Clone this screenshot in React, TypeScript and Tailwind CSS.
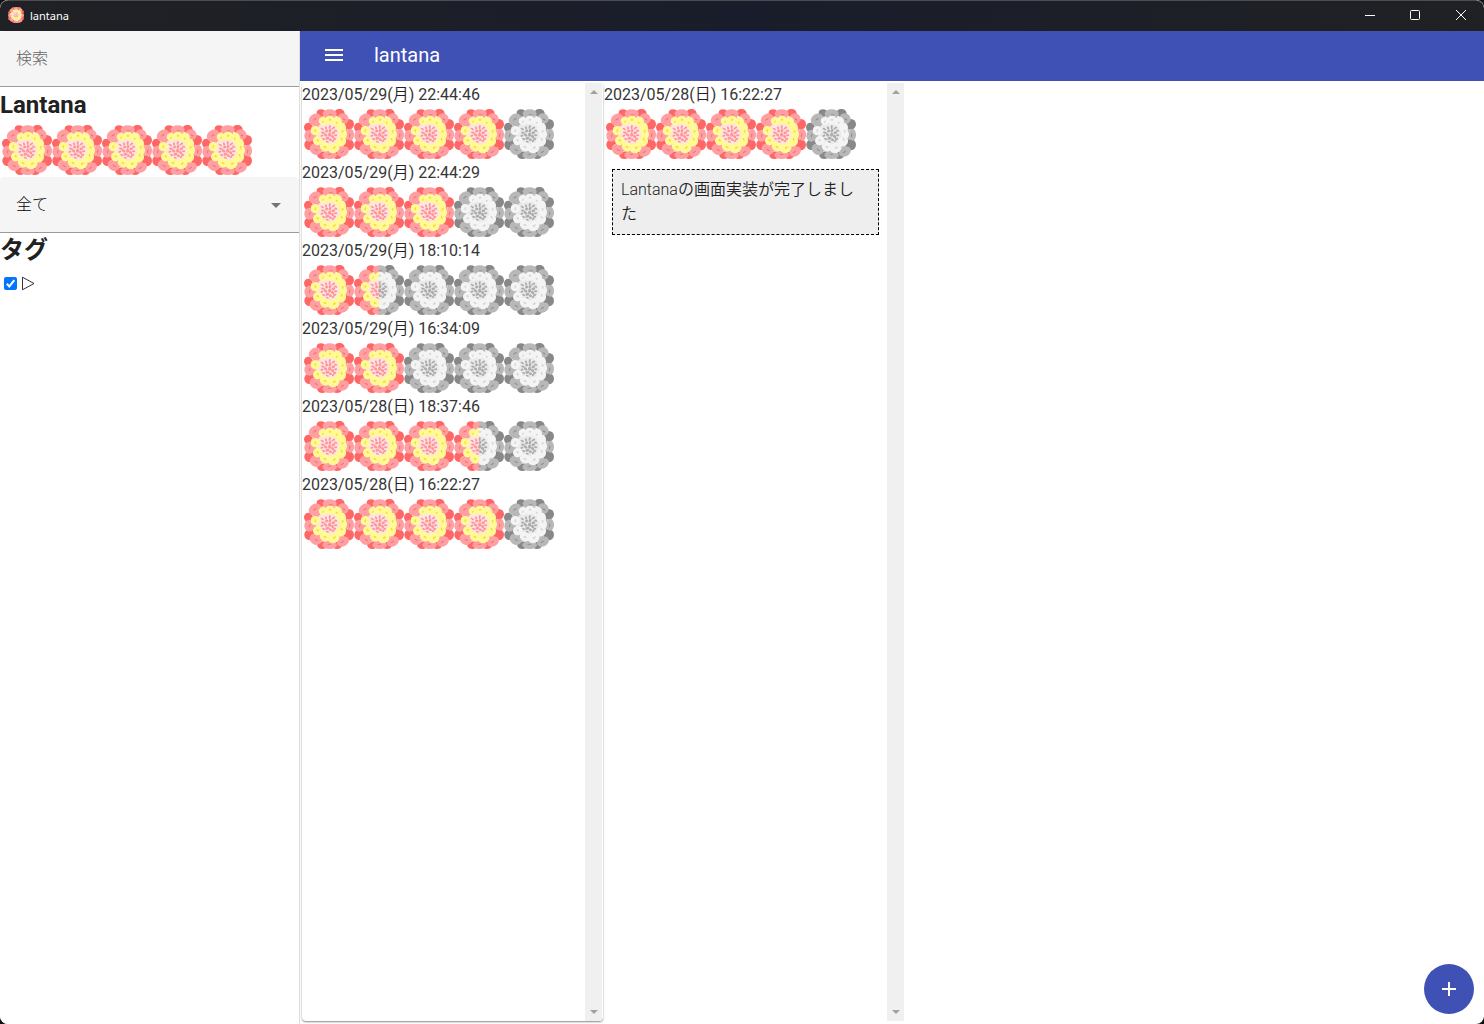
import React from "react";

type Blob = [number, number, number, number, number];

const outerDark: Blob[] = [
  [51, 12, 13, 11, 0], [107, 12, 15, 12, 10], [135, 46, 15, 16, 0], [13, 55, 13, 14, 0],
  [16, 107, 15, 16, 10], [134, 107, 16, 17, 0], [55, 139, 15, 11, 0], [99, 139, 15, 11, 0],
];
const outerLight: Blob[] = [
  [77, 14, 21, 13, 0], [33, 31, 20, 16, -35], [117, 29, 17, 16, 30],
  [139, 77, 11, 18, 0], [16, 80, 15, 18, 0], [35, 121, 19, 16, 30], [77, 138, 22, 12, 0],
  [117, 128, 19, 14, -30],
];
const inner: Blob[] = [
  [57, 36, 13, 12, 0], [78, 33, 15, 13, 0], [100, 38, 14, 15, 0], [113, 56, 13, 15, 0],
  [117, 76, 12, 16, 0], [111, 98, 16, 14, -40], [89, 117, 18, 15, -20], [63, 113, 16, 14, 25],
  [41, 95, 14, 14, 35], [34, 65, 14, 14, 0],
];
const outerMarks: Blob[] = [
  [33, 31, 6, 1.8, -35], [80, 17, 6, 1.6, 0], [120, 31, 5, 2, 35], [17, 80, 1.8, 6, 15],
  [137, 79, 1.8, 6, 10], [37, 123, 6, 1.8, 30], [76, 136, 6, 1.6, 0], [115, 129, 6, 2, -35],
];
const innerMarks: Blob[] = [
  [57, 38, 2, 4, 30], [78, 32, 4, 3, 0], [98, 41, 3, 3, 0], [116, 67, 2.5, 5, 0],
  [113, 91, 2.5, 5, -20], [91, 116, 5, 3, -35], [63, 114, 5, 3, 30], [41, 94, 4, 3, 40],
  [34, 65, 2.5, 5, 10],
];
const center: Blob[] = [
  [55, 60, 6, 2.5, 30], [66, 57, 3, 5, -20], [77, 54, 3, 6, 10], [88, 57, 6, 3, -30],
  [95, 65, 5, 3, 20], [57, 71, 6, 3, 10], [68, 66, 5, 4, -40], [78, 65, 4, 6, 20],
  [88, 71, 6, 4, -20], [95, 79, 5, 3, 0], [54, 80, 5, 3, -30], [65, 78, 6, 4, 40],
  [77, 77, 5, 6, 0], [86, 83, 6, 4, 50], [92, 90, 5, 3, -20], [59, 90, 5, 3, 30],
  [70, 88, 6, 4, -20], [79, 92, 5, 4, 20], [87, 96, 4, 3, -40], [70, 98, 5, 2.5, 20],
];

const warm = { dark: "#ff6666", light: "#ff9fa2", mark: "#f57175", ring: "#fffa96", ringMark: "#f8dc3c", core: "#ffe4e4", bits: "#ff9598" };
const grey = { dark: "#888888", light: "#b8b8b8", mark: "#8f8f8f", ring: "#f4f4f4", ringMark: "#d6d6d6", core: "#eaeaea", bits: "#acacac" };

function Blobs({ items, fill }: { items: Blob[]; fill: string }) {
  return (
    <g fill={fill}>
      {items.map(([x, y, rx, ry, a], i) => (
        <ellipse key={i} cx={x} cy={y} rx={rx} ry={ry} transform={`rotate(${a} ${x} ${y})`} />
      ))}
    </g>
  );
}

function Petals({ palette }: { palette: typeof warm }) {
  return (
    <>
      <circle cx="76" cy="76" r="56" fill={palette.light} />
      <Blobs items={outerDark} fill={palette.dark} />
      <Blobs items={outerLight} fill={palette.light} />
      <Blobs items={outerMarks} fill={palette.mark} />
      <ellipse cx="74" cy="74" rx="38" ry="37" fill={palette.core} />
      <Blobs items={inner} fill={palette.ring} />
      <circle cx="75" cy="75" r="27" fill={palette.core} />
      <Blobs items={innerMarks} fill={palette.ringMark} />
      <Blobs items={center} fill={palette.bits} />
    </>
  );
}

function Flower({ value, className = "size-[50px]" }: { value: number; className?: string }) {
  return (
    <span className={`relative block shrink-0 ${className}`}>
      <svg viewBox="0 0 150 150" className="block size-full">
        <Petals palette={value === 1 ? warm : grey} />
      </svg>
      {value === 0.5 && (
        <span className="absolute inset-y-0 left-0 w-1/2 overflow-hidden bg-white">
          <svg viewBox="0 0 150 150" className="block size-[50px] max-w-none">
            <Petals palette={warm} />
          </svg>
        </span>
      )}
    </span>
  );
}

function Rating({ score }: { score: number }) {
  return (
    <div className="flex h-[54px] p-0.5">
      {[0, 1, 2, 3, 4].map((i) => (
        <Flower key={i} value={Math.max(0, Math.min(1, score - i))} />
      ))}
    </div>
  );
}

function Entry({ date, day, time, score }: { date: string; day: string; time: string; score: number }) {
  return (
    <div>
      <div className="h-6 whitespace-nowrap leading-[23px] text-[#363636]">
        {date}(<span className="font-[350] text-[#222]">{day}</span>) {time}
      </div>
      <Rating score={score} />
    </div>
  );
}

function Scrollbar() {
  return (
    <div className="flex w-[17px] shrink-0 flex-col items-center justify-between bg-[#f0f0f0] py-[7px]">
      <svg width="8" height="4" viewBox="0 0 8 4" fill="#a0a0a0"><path d="M0 4 4 0l4 4z" /></svg>
      <svg width="8" height="4" viewBox="0 0 8 4" fill="#a0a0a0"><path d="M0 0 4 4 8 0z" /></svg>
    </div>
  );
}

const entries = [
  { date: "2023/05/29", day: "月", time: "22:44:46", score: 4 },
  { date: "2023/05/29", day: "月", time: "22:44:29", score: 3 },
  { date: "2023/05/29", day: "月", time: "18:10:14", score: 1.5 },
  { date: "2023/05/29", day: "月", time: "16:34:09", score: 2 },
  { date: "2023/05/28", day: "日", time: "18:37:46", score: 3.5 },
  { date: "2023/05/28", day: "日", time: "16:22:27", score: 4 },
];

function TitleBar() {
  return (
    <header className="flex h-[31px] shrink-0 items-center rounded-t-lg border-t border-[#4b4d50] bg-linear-to-r from-[#202124] via-[#191d2b] to-[#202124] pl-2 text-white">
      <Flower value={1} className="-mt-0.5 size-4" />
      <span className="ml-1.5 font-['Noto_Sans'] text-[11px] leading-4">lantana</span>
      <div className="ml-auto flex">
        <svg width="45" height="30" viewBox="0 0 45 30" stroke="#fff"><path d="M16 14.5h10" /></svg>
        <svg width="45" height="30" viewBox="0 0 45 30" fill="none" stroke="#fff"><rect x="16.5" y="9.5" width="9" height="9" rx="1" /></svg>
        <svg width="45" height="30" viewBox="0 0 45 30" stroke="#fff"><path d="m17 9 10 10M27 9 17 19" /></svg>
      </div>
    </header>
  );
}

function Sidebar() {
  return (
    <aside className="w-[300px] shrink-0 border-r border-[#dedede] bg-white">
      <div className="flex h-14 items-center rounded-t border-b border-[#9b9b9b] bg-[#f5f5f5] px-4 font-light text-[#666]">検索</div>
      <h2 className="h-9 text-2xl font-bold leading-9">Lantana</h2>
      <Rating score={5} />
      <div className="flex h-14 items-center justify-between rounded-t border-b border-[#9b9b9b] bg-[#f5f5f5] pl-4 pr-[18px]">
        <span className="font-light text-black">全て</span>
        <svg className="mt-px" width="10" height="5" viewBox="0 0 10 5" fill="#757575"><path d="M0 0h10L5 5z" /></svg>
      </div>
      <h2 className="h-9 text-2xl font-bold leading-[35px]">タグ</h2>
      <div className="flex h-7 items-center pl-1">
        <span className="flex size-[13px] items-center justify-center rounded-[2px] bg-[#0075ff]">
          <svg width="13" height="13" viewBox="0 0 13 13" fill="none" stroke="#fff" strokeWidth="2"><path d="m2.8 6.8 2.5 2.6 5-6.3" /></svg>
        </span>
        <svg className="ml-[5px]" width="13" height="15" viewBox="0 0 13 15" fill="none" stroke="#333"><path d="M.5 1.2v12.6L12 7.5z" /></svg>
      </div>
    </aside>
  );
}

export default function App() {
  return (
    <div className="h-[1024px] w-[1484px] overflow-hidden bg-[#111] font-[Roboto,'Noto_Sans_CJK_JP',sans-serif] text-base text-[#212121]">
      <div className="flex h-full flex-col overflow-hidden rounded-lg bg-white">
        <TitleBar />
        <div className="flex min-h-0 flex-1">
          <Sidebar />
          <main className="flex min-w-0 flex-1 flex-col">
            <div className="flex h-[50px] shrink-0 items-center bg-[#3f51b5] pl-[25px] text-white">
              <svg className="-mt-0.5" width="18" height="12" viewBox="0 0 18 12" fill="#fff"><path d="M0 0h18v2H0zM0 5h18v2H0zM0 10h18v2H0z" /></svg>
              <h1 className="ml-[31px] pb-0.5 text-xl leading-7">lantana</h1>
            </div>
            <div className="flex min-h-0 flex-1 pb-[3px] pl-0.5 pt-0.5">
              <section className="mr-px flex w-[301px] overflow-hidden rounded bg-white pr-px shadow-[0_1px_2px_#888]">
                <div className="flex-1">
                  {entries.map((e) => <Entry key={e.date + e.time} {...e} />)}
                </div>
                <Scrollbar />
              </section>
              <section className="flex w-[300px]">
                <div className="flex-1">
                  <Entry {...entries[5]} />
                  <div className="m-2 h-[66px] border border-dashed border-black bg-[#eeeeee] p-2 pr-3 leading-6">
                    <p className="font-[350]">Lantanaの画面実装が完了しました</p>
                  </div>
                </div>
                <Scrollbar />
              </section>
            </div>
          </main>
        </div>
      </div>
      <button aria-label="追加" className="fixed bottom-2.5 right-2.5 flex size-[50px] items-center justify-center rounded-full bg-[#3f51b5]">
        <svg width="14" height="14" viewBox="0 0 14 14" fill="#fff"><path d="M6 0h2v6h6v2H8v6H6V8H0V6h6z" /></svg>
      </button>
    </div>
  );
}
